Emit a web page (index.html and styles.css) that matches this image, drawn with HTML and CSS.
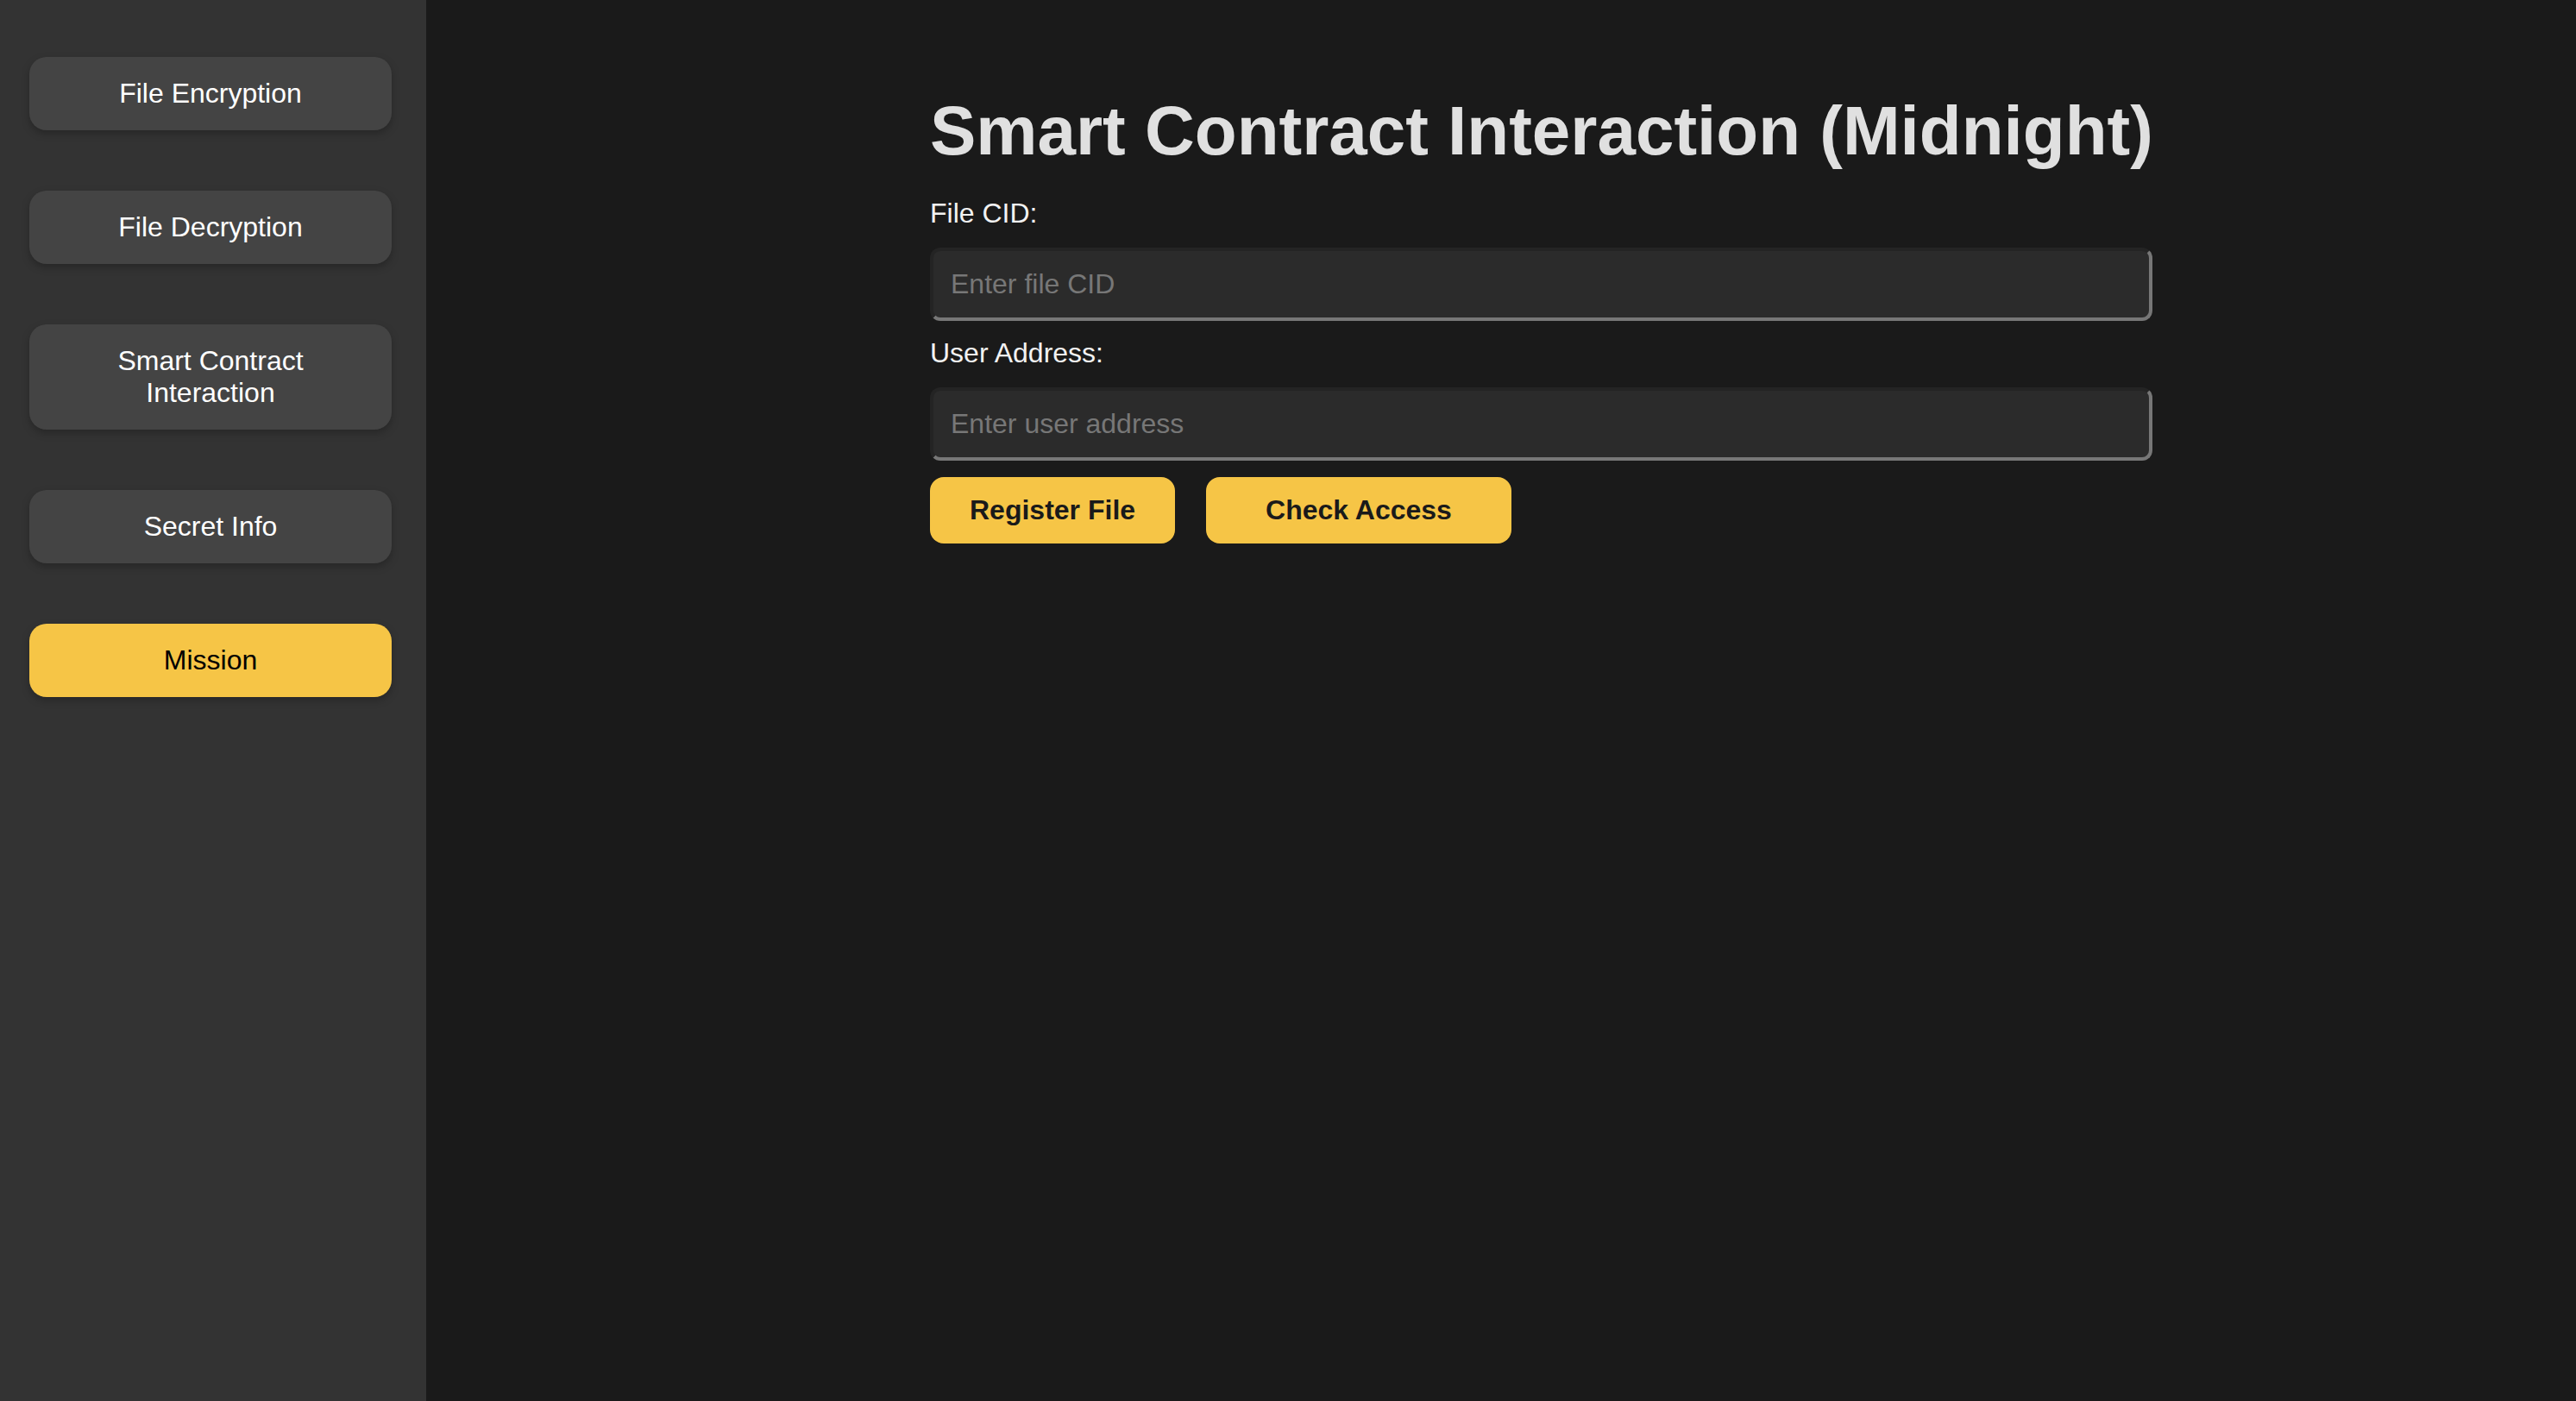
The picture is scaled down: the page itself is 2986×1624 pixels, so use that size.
FILE: index.html
```html
<!DOCTYPE html>
<html lang="en">
<head>
<meta charset="utf-8">
<title>Smart Contract Interaction (Midnight)</title>
<link rel="stylesheet" href="styles.css">
</head>
<body>
<div class="app">
  <nav class="sidebar">
    <button class="nav-btn">File Encryption</button>
    <button class="nav-btn">File Decryption</button>
    <button class="nav-btn">Smart Contract<br>Interaction</button>
    <button class="nav-btn">Secret Info</button>
    <button class="nav-btn nav-btn-active">Mission</button>
  </nav>
  <main class="main">
    <section class="panel">
      <h1 class="title">Smart Contract Interaction (Midnight)</h1>
      <label class="field-label" for="cid">File CID:</label>
      <input class="field-input" id="cid" type="text" placeholder="Enter file CID">
      <label class="field-label" for="addr">User Address:</label>
      <input class="field-input" id="addr" type="text" placeholder="Enter user address">
      <div class="actions">
        <button class="action-btn action-register">Register File</button>
        <button class="action-btn action-check">Check Access</button>
      </div>
    </section>
  </main>
</div>
</body>
</html>
```

FILE: styles.css
```css
html, body {
  margin: 0;
  padding: 0;
  height: 100%;
}

body {
  background: #1a1a1a;
  font-family: "Liberation Sans", Arial, sans-serif;
  color: #ffffff;
}

.app {
  display: flex;
  min-height: 1624px;
}

.sidebar {
  width: 494px;
  box-sizing: border-box;
  background: #333333;
  padding: 66px 40px 0 34px;
  display: flex;
  flex-direction: column;
  gap: 70px;
  flex-shrink: 0;
}

.nav-btn {
  display: block;
  width: 420px;
  border: none;
  border-radius: 20px;
  background: #444444;
  color: #ffffff;
  font-family: "Liberation Sans", Arial, sans-serif;
  font-size: 32px;
  line-height: 37px;
  padding: 24px 20px;
  text-align: center;
  box-shadow: 0 4px 10px rgba(0, 0, 0, 0.25);
  cursor: pointer;
}

.nav-btn-active {
  background: #f6c546;
  color: #000000;
}

.main {
  flex: 1;
  padding: 106px 0 0 584px;
}

.panel {
  width: 1417px;
  display: flex;
  flex-direction: column;
  align-items: flex-start;
}

.title {
  margin: 0 0 31px 0;
  font-size: 80px;
  font-weight: bold;
  line-height: 92px;
  color: #e0e0e0;
  white-space: nowrap;
}

.field-label {
  display: block;
  font-size: 32px;
  line-height: 37px;
  color: #f2f2f2;
  margin-bottom: 21px;
}

.field-input {
  display: block;
  width: 100%;
  height: 85px;
  box-sizing: border-box;
  margin: 0 0 19px 0;
  padding: 0 20px;
  background: #2b2b2b;
  border-width: 4px;
  border-style: solid;
  border-color: #242424 #777777 #777777 #242424;
  border-radius: 12px;
  color: #ffffff;
  font-family: "Liberation Sans", Arial, sans-serif;
  font-size: 32px;
  outline: none;
}

.field-input::placeholder {
  color: #777777;
}

.actions {
  display: flex;
  gap: 36px;
}

.action-btn {
  border: none;
  border-radius: 16px;
  background: #f6c546;
  color: #1a1a1a;
  font-family: "Liberation Sans", Arial, sans-serif;
  font-size: 32px;
  font-weight: bold;
  line-height: 37px;
  padding: 20px 46px;
  cursor: pointer;
}

.action-check {
  padding: 20px 69px;
}
```
